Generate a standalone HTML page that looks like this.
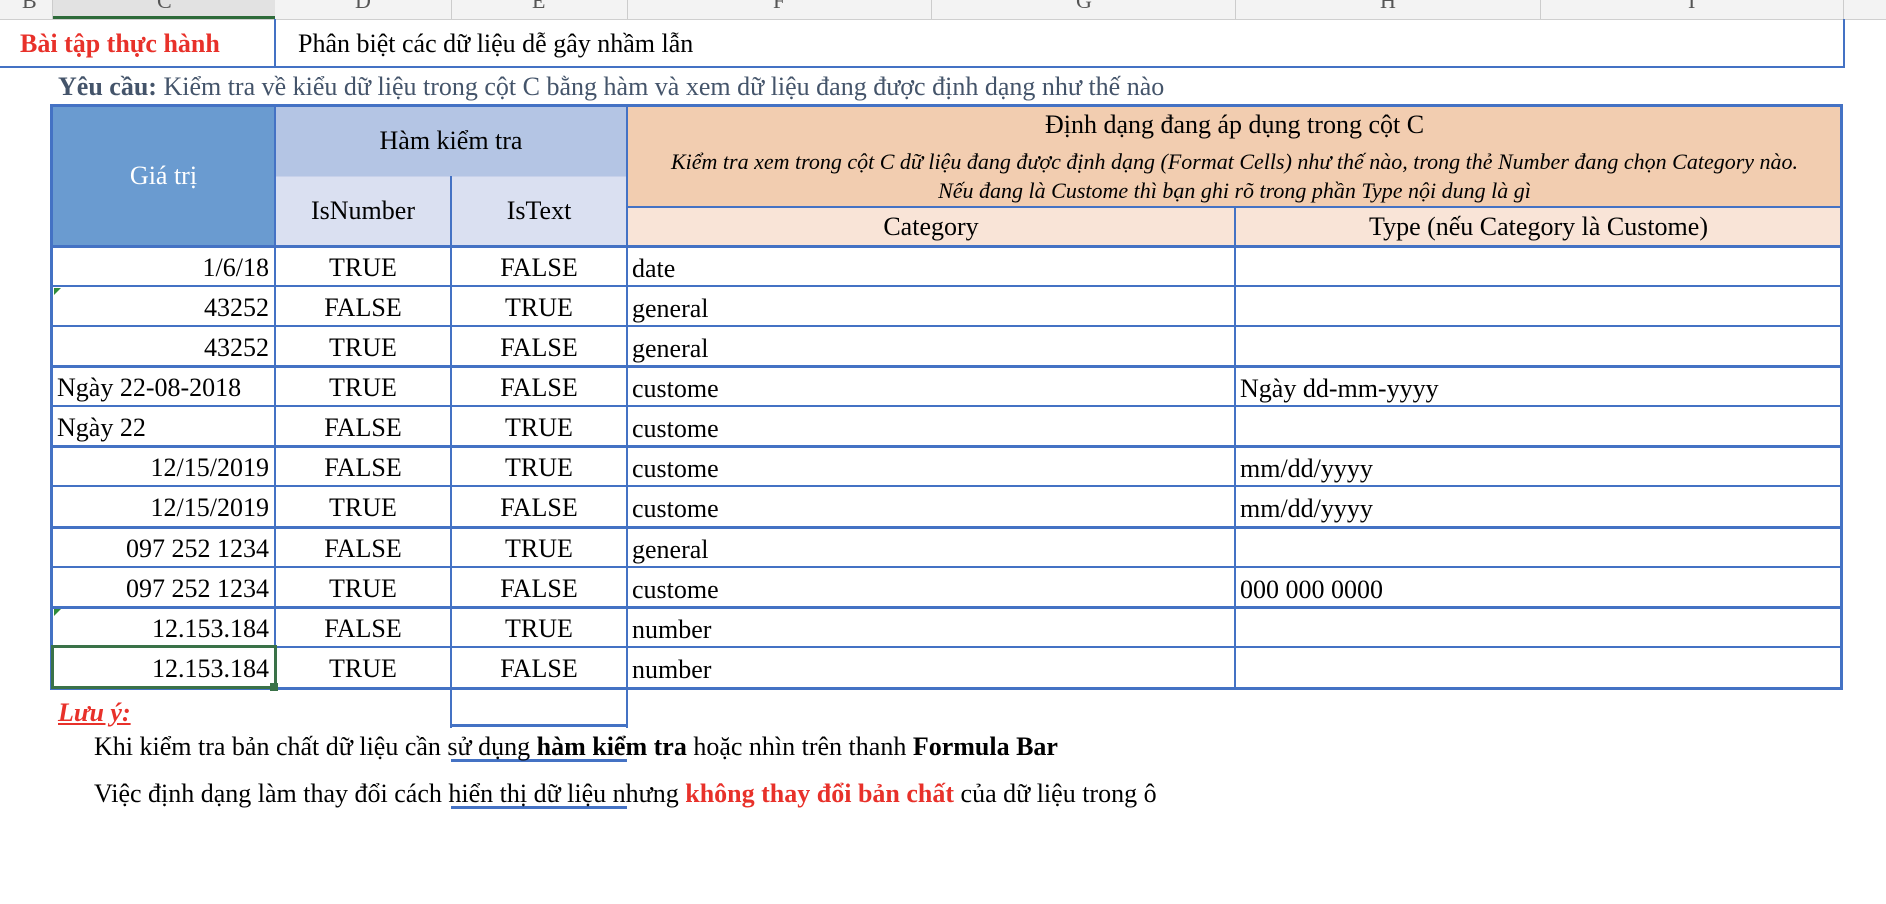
<!DOCTYPE html>
<html><head><meta charset="utf-8">
<style>
body{margin:0;width:1886px;height:904px;background:#fff;position:relative;overflow:hidden;font-family:"Liberation Serif","Noto Serif CJK SC",serif;color:#000}
.a{position:absolute}
.t{position:absolute;font-size:26px;line-height:40px;white-space:nowrap}
.hl{position:absolute;background:#4472c4}
.c{text-align:center}
.r{text-align:right}
</style></head><body>
<div class="a" style="left:0;top:0;width:1886px;height:19px;background:#f3f3f3;border-bottom:1px solid #cfcfcf"></div>
<div class="a" style="left:52px;top:0;width:223px;height:19px;background:#e2e2e2;border-bottom:3px solid #2e6b3a;box-sizing:border-box"></div>
<div class="a" style="top:0;left:0;width:1886px;height:19px;overflow:hidden;font-family:'Liberation Serif',serif;font-size:22px;color:#555">
<span class="a" style="left:22px;top:-12px">B</span><span class="a" style="left:157px;top:-12px">C</span><span class="a" style="left:355px;top:-12px">D</span><span class="a" style="left:532px;top:-12px">E</span><span class="a" style="left:773px;top:-12px">F</span><span class="a" style="left:1076px;top:-12px">G</span><span class="a" style="left:1380px;top:-12px">H</span><span class="a" style="left:1688px;top:-12px">I</span>
</div>
<div class="a" style="left:52px;top:0;width:1px;height:19px;background:#ccc"></div>
<div class="a" style="left:451px;top:0;width:1px;height:19px;background:#ccc"></div>
<div class="a" style="left:627px;top:0;width:1px;height:19px;background:#ccc"></div>
<div class="a" style="left:931px;top:0;width:1px;height:19px;background:#ccc"></div>
<div class="a" style="left:1235px;top:0;width:1px;height:19px;background:#ccc"></div>
<div class="a" style="left:1540px;top:0;width:1px;height:19px;background:#ccc"></div>
<div class="a" style="left:1843px;top:0;width:1px;height:19px;background:#ccc"></div>

<div class="t" style="left:20px;top:24px;color:#e8312a;font-weight:bold">Bài tập thực hành</div>
<div class="t" style="left:298px;top:24px">Phân biệt các dữ liệu dễ gây nhầm lẫn</div>
<div class="hl" style="left:274px;top:19px;width:2px;height:47px"></div>
<div class="hl" style="left:1843px;top:19px;width:2px;height:47px"></div>
<div class="hl" style="left:0;top:66px;width:1845px;height:2px"></div>
<div class="t" style="left:58px;top:68px;color:#44546a;font-size:26px;line-height:38px"><b>Yêu cầu:</b> Kiểm tra về kiểu dữ liệu trong cột C bằng hàm và xem dữ liệu đang được định dạng như thế nào</div>

<div class="a" style="left:52px;top:106px;width:223px;height:139px;background:#6a9bd0"></div>
<div class="a" style="left:275px;top:106px;width:352px;height:70px;background:#b4c5e4"></div>
<div class="a" style="left:275px;top:176px;width:352px;height:69px;background:#dae0f1"></div>
<div class="a" style="left:627px;top:106px;width:1215px;height:101px;background:#f2cdb0"></div>
<div class="a" style="left:627px;top:207px;width:1215px;height:38px;background:#f9e4d7"></div>
<div class="t c" style="left:52px;top:156px;width:223px;color:#fff">Giá trị</div>
<div class="t c" style="left:275px;top:121px;width:352px">Hàm kiểm tra</div>
<div class="t c" style="left:275px;top:191px;width:176px">IsNumber</div>
<div class="t c" style="left:451px;top:191px;width:176px">IsText</div>
<div class="t c" style="left:627px;top:110px;width:1215px;font-size:26px;line-height:30px">Định dạng đang áp dụng trong cột C</div>
<div class="t c" style="left:627px;top:147px;width:1215px;font-size:22px;line-height:29px;font-style:italic">Kiểm tra xem trong cột C dữ liệu đang được định dạng (Format Cells) như thế nào, trong thẻ Number đang chọn Category nào.<br>Nếu đang là Custome thì bạn ghi rõ trong phần Type nội dung là gì</div>
<div class="t c" style="left:627px;top:208px;width:608px;font-size:26px;line-height:38px">Category</div>
<div class="t c" style="left:1235px;top:208px;width:607px;font-size:26px;line-height:38px">Type (nếu Category là Custome)</div>
<div class="hl" style="left:275px;top:176px;width:352px;height:1px;background:#c7d1ea"></div>
<div class="hl" style="left:450px;top:176px;width:2px;height:69px"></div>
<div class="hl" style="left:627px;top:206px;width:1215px;height:2px"></div>
<div class="hl" style="left:1234px;top:206px;width:2px;height:39px"></div>

<div id="d"></div>
<script>
var rows=[["1/6/18","TRUE","FALSE","date",""],["43252","FALSE","TRUE","general",""],["43252","TRUE","FALSE","general",""],["Ngày 22-08-2018","TRUE","FALSE","custome","Ngày dd-mm-yyyy"],["Ngày 22","FALSE","TRUE","custome",""],["12/15/2019","FALSE","TRUE","custome","mm/dd/yyyy"],["12/15/2019","TRUE","FALSE","custome","mm/dd/yyyy"],["097 252 1234","FALSE","TRUE","general",""],["097 252 1234","TRUE","FALSE","custome","000 000 0000"],["12.153.184","FALSE","TRUE","number",""],["12.153.184","TRUE","FALSE","number",""]];
var ys=[246,286,326,366,406,446,486,527,567,607,647,688];
var h="";
for(var i=0;i<11;i++){var y=ys[i]+2,r=rows[i];var left=(i==3||i==4)?'<div class="t" style="left:57px;top:'+y+'px">'+r[0]+'</div>':'<div class="t r" style="left:52px;top:'+y+'px;width:217px">'+r[0]+'</div>';
h+=left+'<div class="t c" style="left:275px;top:'+y+'px;width:176px">'+r[1]+'</div><div class="t c" style="left:451px;top:'+y+'px;width:176px">'+r[2]+'</div><div class="t" style="left:632px;top:'+(y+1)+'px">'+r[3]+'</div><div class="t" style="left:1240px;top:'+(y+1)+'px">'+r[4]+'</div>';}
for(var j=0;j<12;j++){var th=(j==0||j==3||j==5||j==7||j==9||j==11)?3:2;h+='<div class="hl" style="left:52px;top:'+(ys[j]-1)+'px;width:1790px;height:'+th+'px"></div>';}
document.getElementById("d").innerHTML=h;
</script>
<div class="hl" style="left:50px;top:104px;width:1792px;height:3px"></div>
<div class="hl" style="left:50px;top:104px;width:3px;height:586px"></div>
<div class="hl" style="left:1840px;top:104px;width:3px;height:586px"></div>
<div class="hl" style="left:274px;top:104px;width:2px;height:584px"></div>
<div class="hl" style="left:626px;top:104px;width:2px;height:624px"></div>
<div class="hl" style="left:450px;top:245px;width:2px;height:483px"></div>
<div class="hl" style="left:1234px;top:245px;width:2px;height:443px"></div>
<div class="hl" style="left:451px;top:724px;width:176px;height:3px"></div>
<div class="hl" style="left:451px;top:759px;width:176px;height:3px"></div>
<div class="hl" style="left:451px;top:806px;width:176px;height:3px"></div>
<div class="a" style="left:54px;top:288px;width:0;height:0;border-top:7px solid #2e8b3a;border-right:7px solid transparent"></div>
<div class="a" style="left:54px;top:609px;width:0;height:0;border-top:7px solid #2e8b3a;border-right:7px solid transparent"></div>
<div class="a" style="left:51px;top:645px;width:226px;height:44px;border:3px solid #3a7248;box-sizing:border-box"></div>
<div class="a" style="left:270px;top:683px;width:8px;height:8px;background:#3a7248"></div>

<div class="t" style="left:58px;top:693px;color:#e8312a;font-weight:bold;font-style:italic;text-decoration:underline">Lưu ý:</div>
<div class="t" style="left:94px;top:727px">Khi kiểm tra bản chất dữ liệu cần sử dụng <b>hàm kiểm tra</b> hoặc nhìn trên thanh <b>Formula Bar</b></div>
<div class="t" style="left:94px;top:774px">Việc định dạng làm thay đổi cách hiển thị dữ liệu nhưng <b style="color:#e8312a">không thay đổi bản chất</b> của dữ liệu trong ô</div>
</body></html>
